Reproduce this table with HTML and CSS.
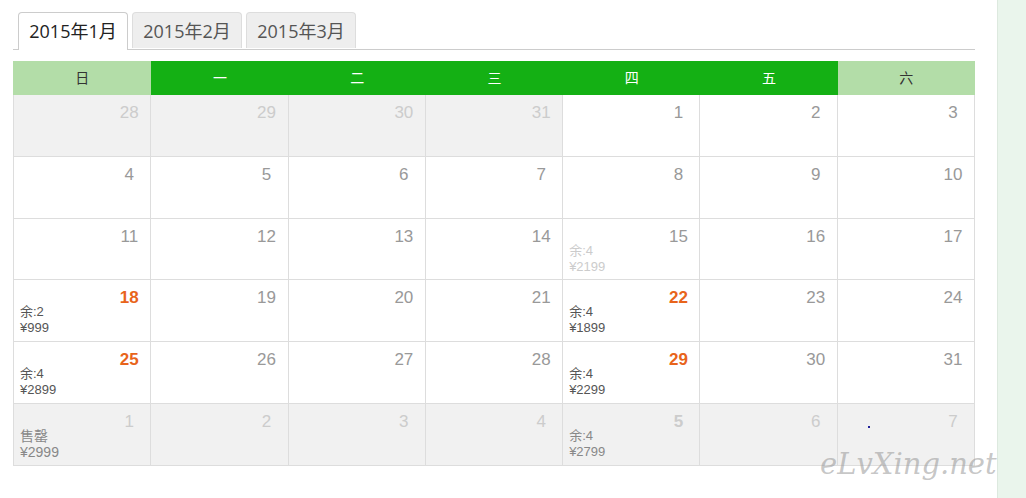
FILE: index.html
```html
<!DOCTYPE html>
<html lang="zh-CN">
<head>
  <meta charset="UTF-8" />
  <title>日历</title>
  <link rel="stylesheet" href="styles.css">
</head>
<body>
<div class="page">
  <div class="main">
    <div class="tabs">
      <span class="tab active">2015年1月</span>
      <span class="tab">2015年2月</span>
      <span class="tab">2015年3月</span>
    </div>

    <div class="calendar">
      <div class="head weekend">日</div>
      <div class="head">一</div>
      <div class="head">二</div>
      <div class="head">三</div>
      <div class="head">四</div>
      <div class="head">五</div>
      <div class="head weekend">六</div>

      <div class="day other"><div class="num">28</div></div>
      <div class="day other"><div class="num">29</div></div>
      <div class="day other"><div class="num">30</div></div>
      <div class="day other"><div class="num">31</div></div>
      <div class="day"><div class="num">1</div></div>
      <div class="day"><div class="num">2</div></div>
      <div class="day"><div class="num">3</div></div>

      <div class="day"><div class="num">4</div></div>
      <div class="day"><div class="num">5</div></div>
      <div class="day"><div class="num">6</div></div>
      <div class="day"><div class="num">7</div></div>
      <div class="day"><div class="num">8</div></div>
      <div class="day"><div class="num">9</div></div>
      <div class="day"><div class="num">10</div></div>

      <div class="day"><div class="num">11</div></div>
      <div class="day"><div class="num">12</div></div>
      <div class="day"><div class="num">13</div></div>
      <div class="day"><div class="num">14</div></div>
      <div class="day past"><div class="num">15</div><div class="info">余:4<br>¥2199</div></div>
      <div class="day"><div class="num">16</div></div>
      <div class="day"><div class="num">17</div></div>

      <div class="day"><div class="num hot">18</div><div class="info">余:2<br>¥999</div></div>
      <div class="day"><div class="num">19</div></div>
      <div class="day"><div class="num">20</div></div>
      <div class="day"><div class="num">21</div></div>
      <div class="day"><div class="num hot">22</div><div class="info">余:4<br>¥1899</div></div>
      <div class="day"><div class="num">23</div></div>
      <div class="day"><div class="num">24</div></div>

      <div class="day"><div class="num hot">25</div><div class="info">余:4<br>¥2899</div></div>
      <div class="day"><div class="num">26</div></div>
      <div class="day"><div class="num">27</div></div>
      <div class="day"><div class="num">28</div></div>
      <div class="day"><div class="num hot">29</div><div class="info">余:4<br>¥2299</div></div>
      <div class="day"><div class="num">30</div></div>
      <div class="day"><div class="num">31</div></div>

      <div class="day other"><div class="num">1</div><div class="info sold">售罄<br>¥2999</div></div>
      <div class="day other"><div class="num">2</div></div>
      <div class="day other"><div class="num">3</div></div>
      <div class="day other"><div class="num">4</div></div>
      <div class="day other"><div class="num bold">5</div><div class="info">余:4<br>¥2799</div></div>
      <div class="day other"><div class="num">6</div></div>
      <div class="day other"><div class="num">7</div><span class="dot"></span></div>
    </div>

    <div class="watermark">eLvXing.net</div>
  </div>
  <div class="side"></div>
</div>
</body>
</html>
```

FILE: styles.css
```css
body {
  margin: 0;
  font-family: 'Open Sans', 'Noto Sans CJK SC', sans-serif;
  background-color: white;
  color: #333;
}

.page {
  display: flex;
  min-height: 498px;
}

.main {
  position: relative;
  width: 962px;
  padding: 12px 22px 0 13px;
}

.side {
  flex: 1;
  background-color: #eaf5ec;
  border-left: 1px solid #dde9df;
}

/* month tabs */
.tabs {
  display: flex;
  gap: 4px;
  padding-left: 5px;
  border-bottom: 1px solid #ccc;
  height: 37px;
}

.tab {
  width: 110px;
  height: 36px;
  box-sizing: border-box;
  text-align: center;
  font-size: 18px;
  line-height: 36px;
  color: #555;
  background-color: #eee;
  border: 1px solid #ddd;
  border-bottom: none;
  border-radius: 4px 4px 0 0;
  cursor: pointer;
}

.tab.active {
  height: 38px;
  color: #222;
  background-color: white;
  border-color: #ccc;
}

/* calendar grid */
.calendar {
  display: grid;
  grid-template-columns: repeat(7, 1fr);
  margin-top: 11px;
  border-left: 1px solid #ddd;
  font-family: 'Liberation Sans', 'Noto Sans CJK SC', sans-serif;
}

.head {
  height: 34px;
  line-height: 34px;
  text-align: center;
  font-size: 14px;
  color: white;
  background-color: #14b014;
}

.head.weekend {
  color: #333;
  background-color: #b3dda8;
}

.calendar .head:first-child {
  margin-left: -1px;
}

.day {
  position: relative;
  height: 60.8px;
  border-right: 1px solid #ddd;
  border-bottom: 1px solid #ddd;
  padding: 0 6px;
}

.day.other {
  background-color: #f1f1f1;
}

.num {
  width: 26px;
  margin: 0 2px 0 auto;
  padding-top: 9px;
  text-align: center;
  font-size: 17px;
  line-height: 18px;
  color: #999;
}

.day.other .num {
  color: #ccc;
}

.num.hot {
  color: #e8641b;
  font-weight: bold;
}

.day.other .num.bold {
  font-weight: bold;
}

.info {
  margin-top: -3px;
  font-size: 13px;
  line-height: 16px;
  color: #555;
}

.day.past .info {
  color: #ccc;
}

.day.other .info {
  color: #888;
}

.info.sold {
  font-size: 14px;
}

.dot {
  position: absolute;
  left: 30px;
  top: 22px;
  width: 2px;
  height: 2px;
  background-color: #22229a;
}

.watermark {
  position: absolute;
  left: 820px;
  top: 447px;
  font-family: 'DejaVu Serif', serif;
  font-style: italic;
  font-size: 29px;
  color: rgba(150, 150, 150, 0.55);
}
```
